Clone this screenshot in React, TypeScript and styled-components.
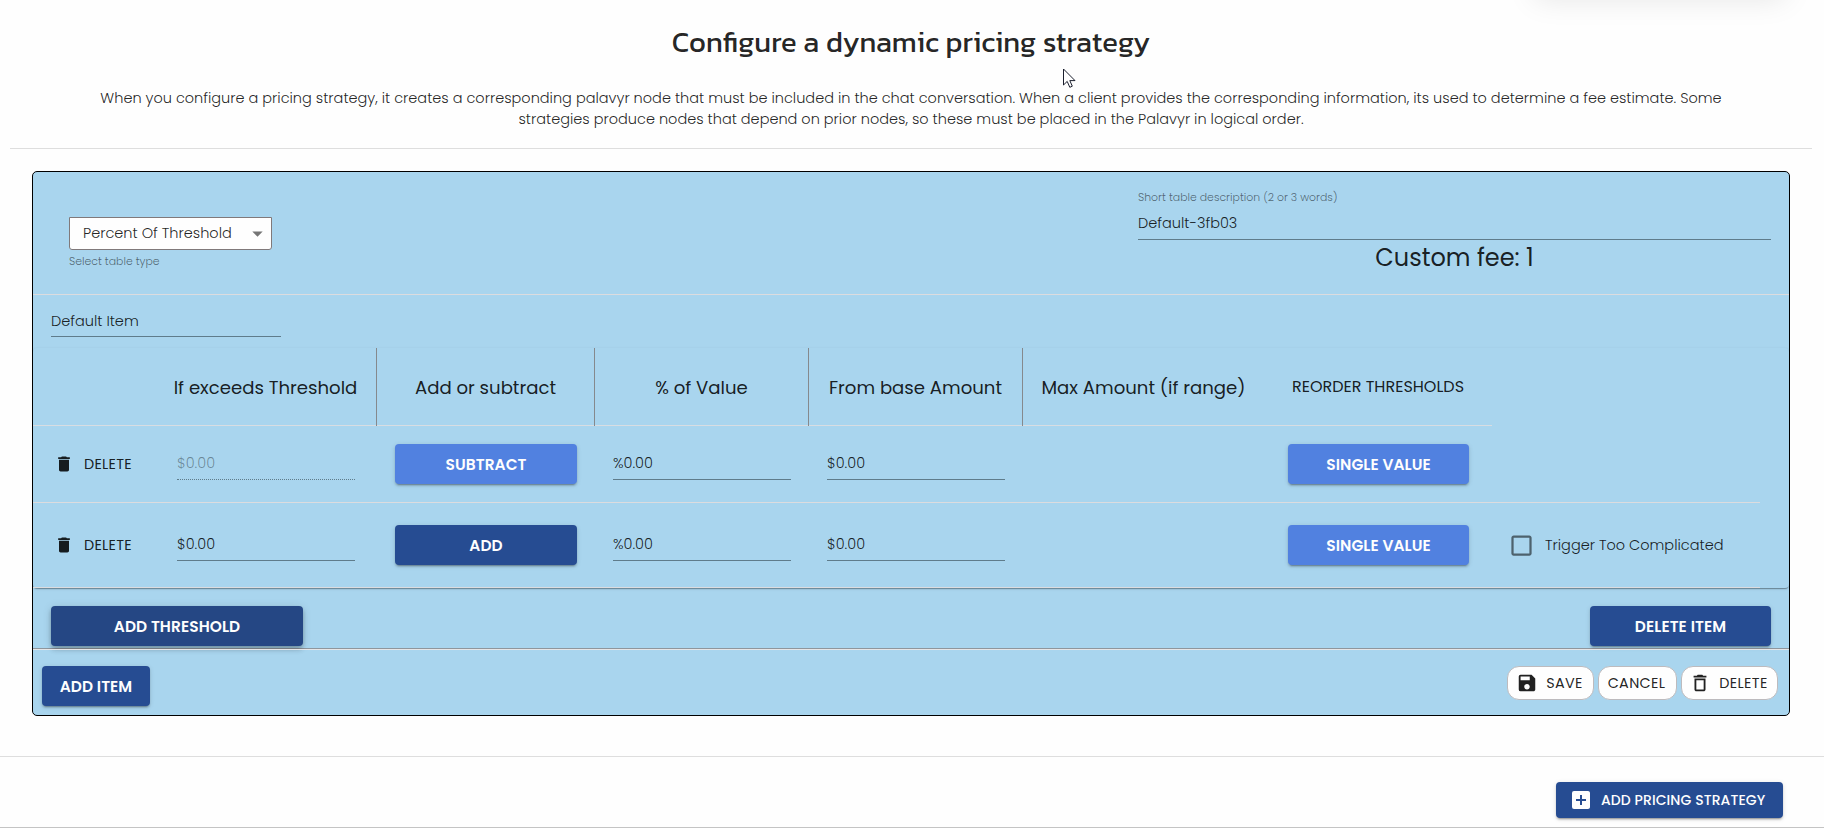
import React from "react";
import styled, { createGlobalStyle, css } from "styled-components";
import {
  MdAddBox,
  MdArrowDropDown,
  MdCheckBoxOutlineBlank,
  MdDelete,
  MdDeleteOutline,
  MdSave,
} from "react-icons/md";

const GlobalStyle = createGlobalStyle`
  * { box-sizing: border-box; }
  html, body { margin: 0; padding: 0; }
  body {
    background: #fefefe;
    color: rgba(0, 0, 0, 0.87);
    font-family: Poppins, Inter, "Liberation Sans", sans-serif;
    font-size: 14.5px;
    font-weight: 300;
    line-height: 21px;
  }
  button { font: inherit; }
`;

const Page = styled.div`
  position: relative;
  display: flex;
  flex-direction: column;
  width: 1824px;
  height: 828px;
  overflow: hidden;
  border-bottom: 1px solid #c4c4c4;
`;

const FloatingShadow = styled.div`
  position: absolute;
  top: -60px;
  right: 42px;
  width: 244px;
  height: 48px;
  box-shadow: 0 8px 30px 3px rgba(0, 0, 0, 0.1);
`;

const Cursor = styled.svg`
  position: absolute;
  left: 1063px;
  top: 68px;
`;

const Intro = styled.header`
  display: flex;
  flex-direction: column;
  align-items: center;
  height: 149px;
  margin: 0 12px 0 10px;
  padding-top: 25px;
  border-bottom: 1px solid #dedede;
  text-align: center;
`;

const Title = styled.h1`
  margin: 0 0 29px;
  font-family: Kanit, "Noto Sans", sans-serif;
  font-size: 29.1px;
  font-weight: 400;
  line-height: 34px;
`;

const Description = styled.p`
  margin: 0;
  white-space: nowrap;
`;

const Card = styled.section`
  display: flex;
  flex-direction: column;
  width: 1758px;
  height: 545px;
  margin: 22px 0 0 32px;
  flex-shrink: 0;
  border: 1px solid #000;
  border-radius: 5px;
  background: #a9d5ee;
  overflow: hidden;
`;

const CardHeader = styled.div`
  display: flex;
  justify-content: space-between;
  height: 123px;
  padding: 0 18px 0 36px;
  border-bottom: 1px solid #dcdcdf;
`;

const TypePicker = styled.div`
  padding-top: 45px;
`;

const Select = styled.div`
  display: flex;
  align-items: center;
  justify-content: space-between;
  width: 203px;
  height: 33px;
  padding: 0 1px 0 13px;
  border: 1px solid #80797a;
  border-radius: 0 0 3px 3px;
  background: #fefefe;
  svg { color: #757575; }
`;

const Hint = styled.div`
  color: rgba(0, 0, 0, 0.54);
  font-size: 10.9px;
  line-height: 14px;
`;

const TypeHint = styled(Hint)`
  margin-top: 5px;
`;

const TableInfo = styled.div`
  width: 633px;
  padding-top: 19px;
`;

const InfoValue = styled.div`
  margin-top: 8px;
  padding-bottom: 5px;
  border-bottom: 1px solid #5f7c8b;
`;

const FeeTitle = styled.div`
  padding-top: 1px;
  font-size: 24px;
  font-weight: 400;
  line-height: 34px;
  text-align: center;
`;

const ItemName = styled.div`
  width: 230px;
  margin: 16px 0 11px 18px;
  padding-bottom: 4px;
  border-bottom: 1px solid #5f7c8b;
`;

const Table = styled.div`
  display: flex;
  flex-direction: column;
  align-items: flex-start;
  height: 240px;
  flex-shrink: 0;
  border-radius: 4px;
  box-shadow: 0 2px 1px -1px rgba(0, 0, 0, 0.2), 0 1px 1px rgba(0, 0, 0, 0.14),
    0 1px 3px rgba(0, 0, 0, 0.12);
  background: #a9d5ee;
`;

const columns = "128px 216px 218px 214px 214px 241px 228px";

const HeadRow = styled.div`
  display: grid;
  grid-template-columns: ${columns};
  height: 78px;
  border-bottom: 1px solid #d8dde2;
`;

const HeadCell = styled.div<{ $divided?: boolean; $small?: boolean; $nudge?: number }>`
  display: flex;
  align-items: center;
  justify-content: center;
  height: 78px;
  padding-right: ${(p) => p.$nudge ?? 0}px;
  font-size: 18.1px;
  font-weight: 400;
  white-space: nowrap;
  ${(p) => p.$divided && css`border-right: 1px solid #85898d;`}
  ${(p) =>
    p.$small &&
    css`
      padding-bottom: 1px;
      font-size: 16px;
    `}
`;

const Row = styled.div<{ $height: number }>`
  display: grid;
  grid-template-columns: ${columns} 268px;
  align-items: center;
  height: ${(p) => p.$height}px;
  border-bottom: 1px solid #dcdcdf;
`;

const RowDelete = styled.button`
  display: flex;
  align-items: center;
  gap: 10px;
  padding: 0 0 0 21px;
  border: 0;
  background: none;
  color: rgba(0, 0, 0, 0.87);
  font-size: 14.4px;
  font-weight: 400;
  letter-spacing: 0.25px;
`;

const Field = styled.div<{ $inset?: number; $disabled?: boolean }>`
  width: 178px;
  height: 32px;
  margin-left: ${(p) => p.$inset ?? 18}px;
  padding-top: 5px;
  border-bottom: 1px ${(p) => (p.$disabled ? "dotted" : "solid")} #5f7c8b;
  color: ${(p) => (p.$disabled ? "rgba(0, 0, 0, 0.38)" : "rgba(0, 0, 0, 0.87)")};
`;

const Button = styled.button<{ $width: number; $light?: boolean }>`
  width: ${(p) => p.$width}px;
  height: 40px;
  padding: 0;
  border: 0;
  border-radius: 4px;
  background: ${(p) => (p.$light ? "#5181e0" : "#264c92")};
  color: #fefefe;
  font-size: 15.4px;
  font-weight: 600;
  letter-spacing: 0.08px;
  box-shadow: 0 3px 1px -2px rgba(0, 0, 0, 0.2), 0 2px 2px rgba(0, 0, 0, 0.14),
    0 1px 5px rgba(0, 0, 0, 0.12);
`;

const ThresholdButton = styled(Button)`
  background: #254784;
  box-shadow: 0 2px 4px -1px rgba(0, 0, 0, 0.2), 0 4px 5px rgba(0, 0, 0, 0.14),
    0 1px 10px rgba(0, 0, 0, 0.12);
`;

const TriggerLabel = styled.label`
  display: flex;
  align-items: center;
  gap: 10px;
  margin-left: 16px;
  white-space: nowrap;
  svg { color: rgba(0, 0, 0, 0.54); }
`;

const ButtonCell = styled.div<{ $inset: number }>`
  display: flex;
  padding-left: ${(p) => p.$inset}px;
`;

const ItemActions = styled.div`
  display: flex;
  justify-content: space-between;
  align-items: flex-start;
  height: 61px;
  padding: 18px 18px 0;
  border-bottom: 1px solid #8f969d;
`;

const CardFooter = styled.div`
  display: flex;
  justify-content: space-between;
  align-items: flex-start;
  flex: 1;
  padding: 16px 11px 0 9px;
  border-top: 1px solid #e6e6e8;
`;

const PillGroup = styled.div`
  display: flex;
  gap: 4px;
`;

const Pill = styled.button<{ $width: number }>`
  display: flex;
  align-items: center;
  justify-content: center;
  gap: 8px;
  width: ${(p) => p.$width}px;
  height: 34px;
  padding: 0 2px 0 0;
  border: 1px solid #bdbbbe;
  border-radius: 12px;
  background: #fefefe;
  color: rgba(0, 0, 0, 0.87);
  font-size: 14.4px;
  font-weight: 400;
  letter-spacing: 0.35px;
`;

const PageFooter = styled.footer`
  display: flex;
  justify-content: flex-end;
  align-items: flex-start;
  flex: 1;
  margin-top: 40px;
  padding: 25px 41px 0 0;
  border-top: 1px solid #dedede;
`;

const AddStrategy = styled.button`
  display: flex;
  align-items: center;
  gap: 8px;
  width: 227px;
  height: 36px;
  padding: 0 0 0 13px;
  border: 0;
  border-radius: 4px;
  background: #264c92;
  color: #fefefe;
  font-size: 14px;
  font-weight: 500;
  letter-spacing: 0.08px;
  white-space: nowrap;
  box-shadow: 0 3px 1px -2px rgba(0, 0, 0, 0.2), 0 2px 2px rgba(0, 0, 0, 0.14),
    0 1px 5px rgba(0, 0, 0, 0.12);
`;

const headings = [
  { label: "" },
  { label: "If exceeds Threshold", divided: true, nudge: 6 },
  { label: "Add or subtract", divided: true },
  { label: "% of Value", divided: true },
  { label: "From base Amount", divided: true },
  { label: "Max Amount (if range)" },
  { label: "REORDER THRESHOLDS", small: true },
];

const rows = [
  { height: 77, operation: "SUBTRACT", light: true, disabled: true, trigger: false },
  { height: 85, operation: "ADD", light: false, disabled: false, trigger: true },
];

export default function App() {
  return (
    <>
      <GlobalStyle />
      <Page>
        <FloatingShadow />
        <Intro>
          <Title>Configure a dynamic pricing strategy</Title>
          <Description>
            When you configure a pricing strategy, it creates a corresponding palavyr node that must be included in the
            chat conversation. When a client provides the corresponding information, its used to determine a fee
            estimate. Some
            <br />
            strategies produce nodes that depend on prior nodes, so these must be placed in the Palavyr in logical
            order.
          </Description>
        </Intro>

        <Card>
          <CardHeader>
            <TypePicker>
              <Select>
                Percent Of Threshold
                <MdArrowDropDown size={25} />
              </Select>
              <TypeHint>Select table type</TypeHint>
            </TypePicker>
            <TableInfo>
              <Hint>Short table description (2 or 3 words)</Hint>
              <InfoValue>Default-3fb03</InfoValue>
              <FeeTitle>Custom fee: 1</FeeTitle>
            </TableInfo>
          </CardHeader>

          <ItemName>Default Item</ItemName>

          <Table>
            <HeadRow>
              {headings.map((h) => (
                <HeadCell key={h.label} $divided={h.divided} $small={h.small} $nudge={h.nudge}>
                  {h.label}
                </HeadCell>
              ))}
            </HeadRow>
            {rows.map((row) => (
              <Row key={row.operation} $height={row.height}>
                <RowDelete>
                  <MdDelete size={20} />
                  DELETE
                </RowDelete>
                <Field $inset={16} $disabled={row.disabled}>$0.00</Field>
                <ButtonCell $inset={18}>
                  <Button $width={182} $light={row.light}>{row.operation}</Button>
                </ButtonCell>
                <Field>%0.00</Field>
                <Field>$0.00</Field>
                <span />
                <ButtonCell $inset={24}>
                  <Button $width={181} $light>SINGLE VALUE</Button>
                </ButtonCell>
                {row.trigger && (
                  <TriggerLabel>
                    <MdCheckBoxOutlineBlank size={27} />
                    Trigger Too Complicated
                  </TriggerLabel>
                )}
              </Row>
            ))}
          </Table>

          <ItemActions>
            <ThresholdButton $width={252}>ADD THRESHOLD</ThresholdButton>
            <Button $width={181}>DELETE ITEM</Button>
          </ItemActions>

          <CardFooter>
            <Button $width={108}>ADD ITEM</Button>
            <PillGroup>
              <Pill $width={87}>
                <MdSave size={22} />
                SAVE
              </Pill>
              <Pill $width={79}>CANCEL</Pill>
              <Pill $width={97}>
                <MdDeleteOutline size={22} />
                DELETE
              </Pill>
            </PillGroup>
          </CardFooter>
        </Card>

        <PageFooter>
          <AddStrategy>
            <MdAddBox size={24} />
            ADD PRICING STRATEGY
          </AddStrategy>
        </PageFooter>

        <Cursor width="14" height="21" viewBox="0 0 14 21">
          <path
            d="M0.5 1 V17 L4.2 13.4 L6.8 19.3 L9.3 18.2 L6.8 12.6 H12 Z"
            fill="#fff"
            stroke="#1b1f2e"
            strokeWidth="1"
          />
        </Cursor>
      </Page>
    </>
  );
}
